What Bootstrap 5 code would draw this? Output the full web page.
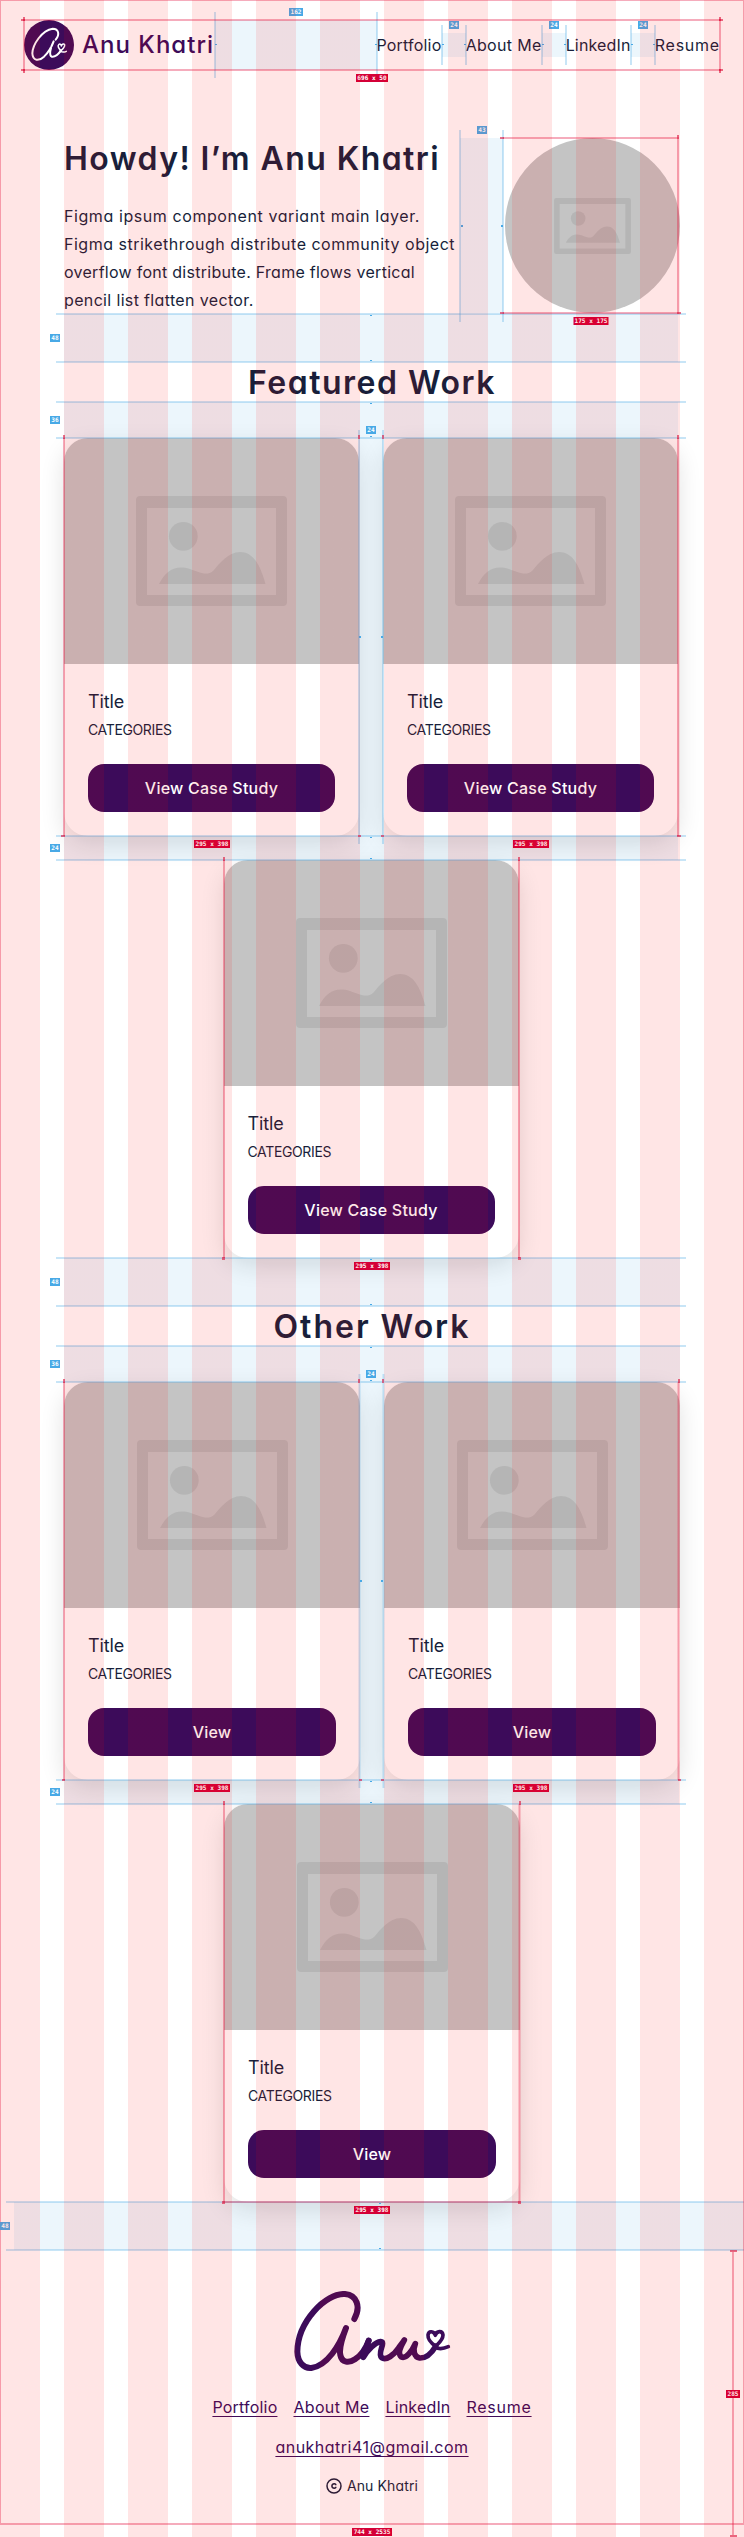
<!DOCTYPE html>
<html lang="en">
<head>
<meta charset="utf-8">
<meta name="viewport" content="width=device-width, initial-scale=1">
<title>Anu Khatri</title>
<link href="https://cdn.jsdelivr.net/npm/bootstrap@5.3.0/dist/css/bootstrap.min.css" rel="stylesheet">
<style>
:root{--ink:#171f3b;--plum:#3c0b5a}
body{font-family:Inter,"Open Sans",sans-serif;font-feature-settings:"cv11" 1;font-size:16px;line-height:24px;color:var(--ink);background:#fff}
.page{width:744px;height:2537px;overflow:hidden}
.site-head{padding:20px 24px 0;height:70px}
.brand-name{font-size:24px;font-weight:500;letter-spacing:1.02px;line-height:30px;color:var(--plum)}
.site-head nav{padding-top:13px}
.site-head a{color:var(--ink);text-decoration:none}
.site-head a,.foot-nav a{white-space:nowrap}
.w65{width:65.2px}.w76{width:76px}
.ls-p{letter-spacing:.2px}.ls-a{letter-spacing:.32px}.ls-l{letter-spacing:.17px}.ls-r{letter-spacing:.74px}
.hero{margin:68px 64px 0;height:175px}
.hero h1,.sec-title{font-size:32px;font-weight:600;line-height:39px;margin:0;white-space:nowrap}
.hero h1{letter-spacing:1.42px;padding-top:1px}
.hero-copy{line-height:28px;margin:24px 0 0;white-space:nowrap}
.hero-copy span{display:block}
.c1{letter-spacing:.58px}.c2{letter-spacing:.5px}.c3{letter-spacing:.27px}.c4{letter-spacing:.35px}
.avatar{width:175px;height:175px;background:#c4c4c4;border-radius:50%}
.sec-title{height:40px;line-height:41px;margin:48px 0 36px;text-align:center}
.sec-title.feat{letter-spacing:1.5px;margin-top:49px}.oth{letter-spacing:1.98px}
.work{gap:24px;padding:0 64px}
.work.featured{width:743px;padding-right:65px}
.work-card{width:295px;height:398px;border-radius:24px;background:#fff;box-shadow:0 8px 24px rgba(0,0,0,.12);overflow:hidden;flex:none}
.other .work-card{width:296px}
.thumb{height:226px;background:#c4c4c4}
.work-body{padding:24px}
.work-title{font-size:18px;line-height:27px;letter-spacing:-.15px}
.cats{font-size:14px;line-height:21px;letter-spacing:-.36px;margin:4px 0 24px}
.btn-plum{--bs-btn-color:#fff;--bs-btn-bg:#3c0b5a;--bs-btn-hover-bg:#4f1a70;--bs-btn-hover-color:#fff;height:48px;border:0;border-radius:16px;font-weight:500;letter-spacing:.24px}
.site-foot{padding-top:41px;margin-top:48px}
.foot-nav{gap:16px;margin-top:23px}
.site-foot a{color:var(--plum);text-decoration:underline;text-underline-offset:3px;text-decoration-thickness:1px}
.mail{letter-spacing:.49px}
.copy{font-size:14px;line-height:21px;letter-spacing:.12px;gap:5px}
.col-grid{inset:0;background:repeating-linear-gradient(90deg,rgba(255,0,0,.1) 0 40px,transparent 40px 64px);pointer-events:none;z-index:3}
.specs{left:0;top:0;z-index:2;pointer-events:none}
.gap-fill rect{fill:#48a9e6;fill-opacity:.1}
.gap-line path{stroke:#48a9e6;stroke-opacity:.3;stroke-width:2;fill:none}
.gap-dot rect{fill:#48a9e6}
.box-line path{stroke:#e3123f;stroke-opacity:.35;stroke-width:2;fill:none}
.box-end rect{fill:#d9123f;fill-opacity:.6}
.specs text{font:700 6.1px "DejaVu Sans Mono",monospace;fill:#fff;text-anchor:middle}
.blue rect{fill:#48a9e6}.red rect{fill:#d40037}
</style>
</head>
<body>
<svg width="0" height="0" class="position-absolute">
  <symbol id="pic" viewBox="0 0 151 110">
    <g fill="#000" fill-opacity=".075"><path fill-rule="evenodd" d="M4 0H147A4 4 0 0 1 151 4V106A4 4 0 0 1 147 110H4A4 4 0 0 1 0 106V4A4 4 0 0 1 4 0ZM11 12V99H140V12Z"/>
    <circle cx="47.3" cy="40.3" r="14.4"/><path d="M23 88C31 73 40 69 54 73C65 77 71 80 77 75C83 68 92 56 104 56C117 56 124 68 129.5 88Z"/></g>
  </symbol>
</svg>
<div class="page position-relative">
  <header class="site-head d-flex align-items-start">
    <div class="d-flex align-items-center">
      <svg width="50" height="50" viewBox="72 60 150 150"><circle cx="147" cy="135" r="75" fill="#3c0b5a"/><g fill="none" stroke="#fff" stroke-width="6" stroke-linecap="round" stroke-linejoin="round"><path d="M167 119C180 103 176 86 158 86C126 90 98 134 97 160C98 184 117 184 132 170C147 155 156 138 161 124C150 145 147 166 155 170C164 172 175 163 183 152"/><path d="M183 152C176 146 172 138 176 134C180 130 184 134 184 138C186 131 193 130 194 135C195 143 186 149 178 157" stroke-width="4.5"/><path d="M180 153C186 157 195 156 199 154" stroke-width="4.5"/></g></svg>
      <span class="brand-name ms-2">Anu Khatri</span>
    </div>
    <nav class="d-flex gap-4 ms-auto">
      <a href="#" class="w65 ls-p">Portfolio</a><a href="#" class="w76 ls-a">About Me</a><a href="#" class="w65 ls-l">LinkedIn</a><a href="#" class="w65 ls-r">Resume</a>
    </nav>
  </header>

  <section class="hero d-flex justify-content-between">
    <div>
      <h1>Howdy! I’m Anu Khatri</h1>
      <p class="hero-copy"><span class="c1">Figma ipsum component variant main layer.</span><span class="c2">Figma strikethrough distribute community object</span><span class="c3">overflow font distribute. Frame flows vertical</span><span class="c4">pencil list flatten vector.</span></p>
    </div>
    <div class="avatar d-flex align-items-center justify-content-center"><svg width="77" height="56"><use href="#pic"/></svg></div>
  </section>

  <h2 class="sec-title feat">Featured Work</h2>
  <section class="work featured d-flex flex-wrap justify-content-center">
    <article class="work-card"><div class="thumb d-flex align-items-center justify-content-center"><svg width="151" height="110"><use href="#pic"/></svg></div><div class="work-body"><div class="work-title">Title</div><div class="cats">CATEGORIES</div><button class="btn btn-plum w-100">View Case Study</button></div></article>
    <article class="work-card"><div class="thumb d-flex align-items-center justify-content-center"><svg width="151" height="110"><use href="#pic"/></svg></div><div class="work-body"><div class="work-title">Title</div><div class="cats">CATEGORIES</div><button class="btn btn-plum w-100">View Case Study</button></div></article>
    <article class="work-card"><div class="thumb d-flex align-items-center justify-content-center"><svg width="151" height="110"><use href="#pic"/></svg></div><div class="work-body"><div class="work-title">Title</div><div class="cats">CATEGORIES</div><button class="btn btn-plum w-100">View Case Study</button></div></article>
  </section>

  <h2 class="sec-title oth">Other Work</h2>
  <section class="work other d-flex flex-wrap justify-content-center">
    <article class="work-card"><div class="thumb d-flex align-items-center justify-content-center"><svg width="151" height="110"><use href="#pic"/></svg></div><div class="work-body"><div class="work-title">Title</div><div class="cats">CATEGORIES</div><button class="btn btn-plum w-100">View</button></div></article>
    <article class="work-card"><div class="thumb d-flex align-items-center justify-content-center"><svg width="151" height="110"><use href="#pic"/></svg></div><div class="work-body"><div class="work-title">Title</div><div class="cats">CATEGORIES</div><button class="btn btn-plum w-100">View</button></div></article>
    <article class="work-card"><div class="thumb d-flex align-items-center justify-content-center"><svg width="151" height="110"><use href="#pic"/></svg></div><div class="work-body"><div class="work-title">Title</div><div class="cats">CATEGORIES</div><button class="btn btn-plum w-100">View</button></div></article>
  </section>

  <footer class="site-foot d-flex flex-column align-items-center">
    <svg width="157" height="81" viewBox="101 92 471 243"><g fill="none" stroke="#3c0b5a" stroke-linecap="round" stroke-linejoin="round"><path stroke-width="18" d="M282 176C302 140 290 104 254 101C196 98 112 184 111 274C112 306 130 325 153 323C200 317 238 255 257 203C246 232 235 262 240 284C245 308 266 309 284 297C304 284 318 260 325 241"/><path stroke-width="17" d="M325 241C320 258 310 280 309 291C322 268 345 246 361 244C378 245 350 277 364 292C378 302 402 282 414 264C421 254 428 246 432 239C420 260 412 282 423 290C438 297 456 270 465 250C457 270 461 290 478 293C500 294 517 273 526 258"/><path stroke-width="11" d="M526 258C512 248 502 236 503 224C505 210 521 212 525 225C529 211 546 210 548 224C548 240 533 250 524 260C536 268 551 265 564 259"/></g></svg>
    <nav class="foot-nav d-flex">
      <a href="#" class="ls-p">Portfolio</a><a href="#" class="ls-a">About Me</a><a href="#" class="ls-l">LinkedIn</a><a href="#" class="ls-r">Resume</a>
    </nav>
    <a href="#" class="mail mt-3">anukhatri41@gmail.com</a>
    <div class="copy d-flex align-items-center mt-3"><svg width="16" height="16" viewBox="0 0 16 16" fill="none" stroke="#171f3b" stroke-width="1.5" stroke-linecap="round"><circle cx="8" cy="8" r="7"/><path d="M9.8 6.6A2.2 2.2 0 1 0 9.8 9.4"/></svg><span>Anu Khatri</span></div>
  </footer>

  <!-- spacing and size annotations -->
  <svg class="specs position-absolute" width="744" height="2537" viewBox="0 0 744 2537">
    <g class="gap-fill">
      <rect x="215" y="20" width="162" height="50"/><rect x="442" y="33" width="24" height="24"/><rect x="542" y="33" width="24" height="24"/><rect x="631" y="33" width="24" height="24"/>
      <rect x="460" y="138" width="43" height="175"/>
      <rect x="64" y="314" width="614" height="48"/><rect x="64" y="402" width="614" height="36"/><rect x="359" y="438" width="24" height="398"/><rect x="64" y="836" width="614" height="24"/>
      <rect x="64" y="1258" width="616" height="48"/><rect x="64" y="1346" width="616" height="36"/><rect x="359.5" y="1382" width="24" height="398"/><rect x="64" y="1780" width="615" height="24"/>
      <rect x="14" y="2202" width="730" height="48"/>
    </g>
    <g class="gap-line">
      <path d="M215 12V78M377 12V74M442 25V65M466 25V65M542 25V65M566 25V65M631 25V65M655 25V65M460 130V322M503 130V322"/>
      <path d="M56 314H686M56 362H686M56 402H686M56 438H686M359 430V844M383 430V844M56 836H686M56 860H686"/>
      <path d="M56 1258H686M56 1306H686M56 1346H686M56 1382H686M359.5 1374V1788M383.5 1374V1788M56 1780H686M56 1804H686M6 2202H744M6 2250H744"/>
    </g>
    <g class="gap-dot">
      <rect x="215" y="44" width="2" height="1"/><rect x="375" y="44" width="2" height="1"/><rect x="442" y="44" width="2" height="1"/><rect x="464" y="44" width="2" height="1"/><rect x="542" y="44" width="2" height="1"/><rect x="564" y="44" width="2" height="1"/><rect x="631" y="44" width="2" height="1"/><rect x="653" y="44" width="2" height="1"/>
      <rect x="461" y="225" width="2" height="2"/><rect x="501" y="225" width="2" height="2"/>
      <rect x="370" y="315" width="2" height="1"/><rect x="370" y="360" width="2" height="1"/><rect x="370" y="403" width="2" height="1"/><rect x="370" y="436" width="2" height="1"/><rect x="359" y="636" width="2" height="2"/><rect x="381" y="636" width="2" height="2"/><rect x="370" y="837" width="2" height="1"/><rect x="370" y="858" width="2" height="1"/>
      <rect x="370" y="1259" width="2" height="1"/><rect x="370" y="1304" width="2" height="1"/><rect x="370" y="1347" width="2" height="1"/><rect x="370" y="1380" width="2" height="1"/><rect x="360" y="1580" width="2" height="2"/><rect x="381" y="1580" width="2" height="2"/><rect x="370" y="1781" width="2" height="1"/><rect x="370" y="1802" width="2" height="1"/><rect x="379" y="2203" width="2" height="1"/><rect x="379" y="2248" width="2" height="1"/>
    </g>
    <g class="box-line">
      <path d="M0 0H744V2524H0ZM24 20H720V70H24ZM503 138H678V313H503"/>
      <path d="M64 438V836M678 438V836M224 860V1258M519 860V1258M64 1382V1780M678.5 1382V1780M224 1804V2202H519.5V1804M733 2252V2535"/>
    </g>
    <g class="box-end">
      <rect x="21" y="19" width="4" height="2"/><rect x="23" y="17" width="2" height="4"/><rect x="719" y="19" width="4" height="2"/><rect x="719" y="17" width="2" height="4"/><rect x="21" y="69" width="4" height="2"/><rect x="23" y="69" width="2" height="4"/><rect x="719" y="69" width="4" height="2"/><rect x="719" y="69" width="2" height="4"/>
      <rect x="500" y="137" width="4" height="2"/><rect x="677" y="135" width="2" height="4"/><rect x="500" y="312" width="4" height="2"/><rect x="677" y="312" width="4" height="2"/>
      <rect x="63" y="435" width="2" height="4"/><rect x="358" y="435" width="2" height="4"/><rect x="382" y="435" width="2" height="4"/><rect x="677" y="435" width="2" height="4"/><rect x="61" y="835" width="4" height="2"/><rect x="358" y="835" width="3" height="2"/><rect x="381" y="835" width="3" height="2"/><rect x="677" y="835" width="4" height="2"/>
      <rect x="223" y="857" width="2" height="4"/><rect x="518" y="857" width="2" height="4"/><rect x="222" y="1257" width="3" height="3"/><rect x="518" y="1257" width="3" height="3"/>
      <rect x="63" y="1379" width="2" height="4"/><rect x="358" y="1379" width="2" height="4"/><rect x="382" y="1379" width="2" height="4"/><rect x="678" y="1379" width="2" height="4"/><rect x="62" y="1779" width="3" height="2"/><rect x="359" y="1779" width="3" height="2"/><rect x="381" y="1779" width="3" height="2"/><rect x="678" y="1779" width="3" height="2"/>
      <rect x="223" y="1801" width="2" height="4"/><rect x="519" y="1801" width="2" height="4"/><rect x="222" y="2201" width="3" height="3"/><rect x="518" y="2201" width="3" height="3"/><rect x="730" y="2250" width="7" height="2"/><rect x="730" y="2535" width="7" height="2"/>
    </g>
    <g class="blue">
      <rect x="289" y="8" width="14" height="8"/><text x="296" y="14.2">162</text>
      <rect x="449" y="21" width="10" height="8"/><text x="454" y="27.2">24</text>
      <rect x="549" y="21" width="10" height="8"/><text x="554" y="27.2">24</text>
      <rect x="638" y="21" width="10" height="8"/><text x="643" y="27.2">24</text>
      <rect x="477" y="126" width="10" height="8"/><text x="482" y="132.2">43</text>
      <rect x="50" y="334" width="10" height="8"/><text x="55" y="340.2">48</text>
      <rect x="50" y="416" width="10" height="8"/><text x="55" y="422.2">36</text>
      <rect x="366" y="426" width="10" height="8"/><text x="371" y="432.2">24</text>
      <rect x="50" y="844" width="10" height="8"/><text x="55" y="850.2">24</text>
      <rect x="50" y="1278" width="10" height="8"/><text x="55" y="1284.2">48</text>
      <rect x="50" y="1360" width="10" height="8"/><text x="55" y="1366.2">36</text>
      <rect x="366" y="1370" width="10" height="8"/><text x="371" y="1376.2">24</text>
      <rect x="50" y="1788" width="10" height="8"/><text x="55" y="1794.2">24</text>
      <rect x="0" y="2222" width="10" height="8"/><text x="5" y="2228.2">48</text>
    </g>
    <g class="red">
      <rect x="356" y="74" width="32" height="8"/><text x="372" y="80.2">696 x 50</text>
      <rect x="573.5" y="317" width="35" height="8"/><text x="591" y="323.2">175 x 175</text>
      <rect x="194" y="840" width="36" height="8"/><text x="212" y="846.2">295 x 398</text>
      <rect x="513" y="840" width="36" height="8"/><text x="531" y="846.2">295 x 398</text>
      <rect x="354" y="1262" width="36" height="8"/><text x="372" y="1268.2">295 x 398</text>
      <rect x="194" y="1784" width="36" height="8"/><text x="212" y="1790.2">295 x 398</text>
      <rect x="513" y="1784" width="36" height="8"/><text x="531" y="1790.2">295 x 398</text>
      <rect x="354" y="2206" width="36" height="8"/><text x="372" y="2212.2">295 x 398</text>
      <rect x="726" y="2390" width="14" height="8"/><text x="733" y="2396.2">285</text>
      <rect x="352" y="2528" width="40" height="8"/><text x="372" y="2534.2">744 x 2535</text>
    </g>
  </svg>
  <div class="col-grid position-absolute"></div>
</div>
<script src="https://cdn.jsdelivr.net/npm/bootstrap@5.3.0/dist/js/bootstrap.bundle.min.js"></script>
</body>
</html>
